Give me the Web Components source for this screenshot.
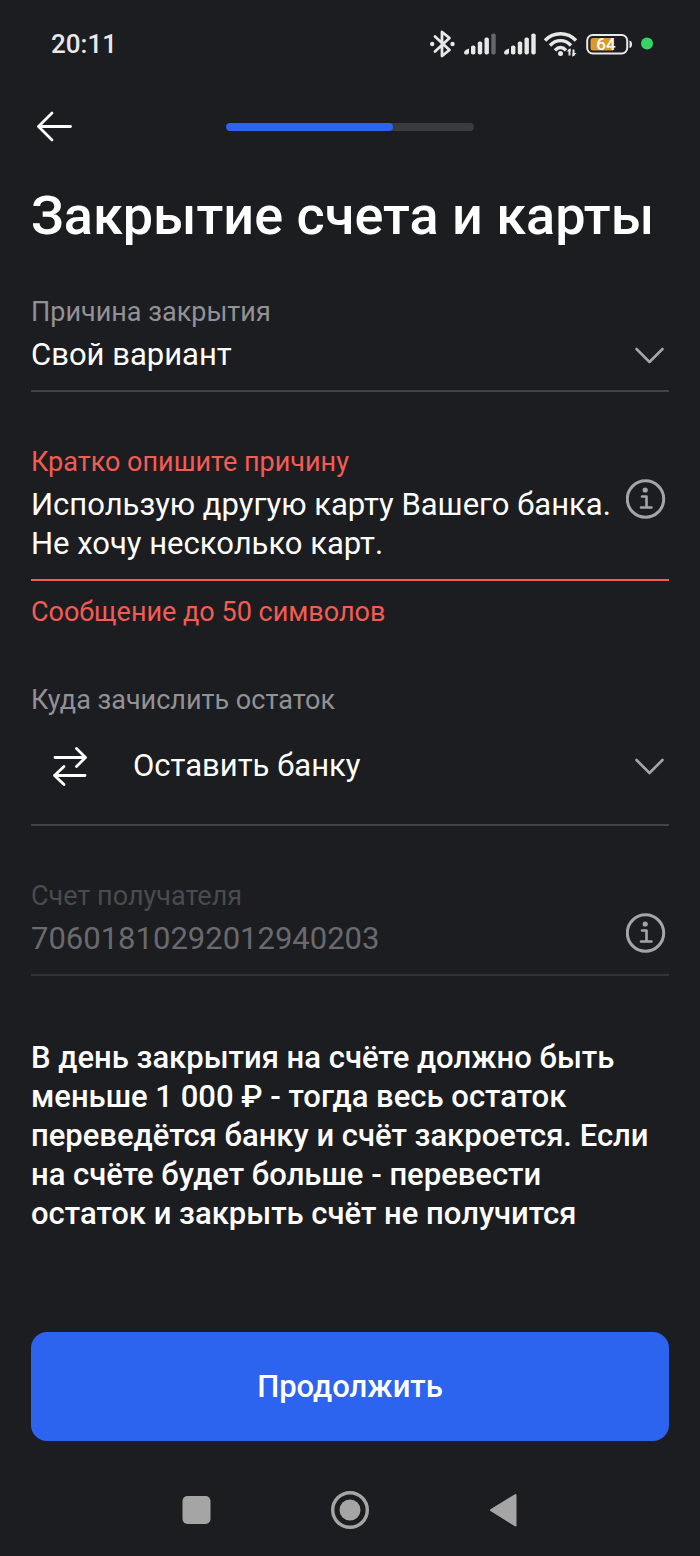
<!DOCTYPE html>
<html lang="ru">
<head>
<meta charset="utf-8">
<meta name="viewport" content="width=device-width, initial-scale=1">
<title>Закрытие счета и карты</title>
<style>
  body {
    margin: 0;
    background: #1c1d21;
    color: #ffffff;
    font-family: Roboto, "Liberation Sans", sans-serif;
    font-size: 31px;
    line-height: 39px;
  }
</style>
</head>
<body>
<close-account-screen></close-account-screen>

<script>
(function () {
  /* =========================
     SHARED
  ========================= */
  class BaseElement extends HTMLElement {
    constructor() {
      super();
      this.attachShadow({ mode: "open" });
      this.shadowRoot.innerHTML = this.template();
    }
  }

  const fieldStyles = `
    *{
      box-sizing:border-box;
    }

    :host{
      display:block;
      --label:#929196;
      --line:#424246;
    }

    .field{
      display:grid;
      grid-template-columns:minmax(0,1fr) auto;
      border-bottom:2px solid var(--line);
      padding-bottom:16px;
    }

    label{
      display:block;
      margin-bottom:5px;
      font-size:27px;
      line-height:36px;
      color:var(--label);
    }

    select,
    input,
    textarea{
      display:block;
      appearance:none;
      width:100%;
      margin:0;
      padding:0;
      border:0;
      border-radius:0;
      outline:0;
      background:none;
      color:inherit;
      font:inherit;
      resize:none;
      overflow:hidden;
    }
  `;

  /* =========================
     STATUS BAR
  ========================= */
  class StatusBar extends BaseElement {
    bars(lastColor) {
      return `
        <svg width="32" height="22" viewBox="0 0 32 22" fill="#e8e8e8">
          <path d="M0 19Q1.500 16 5 15.500V19.500Q5 21.500 3 21.500H1.500Q0 21.500 0 19Z"/>
          <rect x="7" y="12.500" width="4.400" height="9" rx="1.800"/>
          <rect x="13.800" y="8.500" width="4.400" height="13" rx="1.800"/>
          <rect x="20.500" y="4.500" width="4.400" height="17" rx="1.800"/>
          <rect x="27.300" y="0.500" width="4.400" height="21" rx="1.800" fill="${lastColor}"/>
        </svg>`;
    }

    template() {
      return `
      <style>
      :host{
        display:flex;
        align-items:center;
        justify-content:space-between;
        height:88px;
        padding:0 47px 0 51px;
      }

      time{
        font-size:26px;
        font-weight:500;
        color:#e8e8e8;
      }

      .icons{
        display:flex;
        align-items:center;
        gap:8px;
      }

      text{
        font:500 17px Roboto, "Liberation Sans", sans-serif;
      }
      </style>

      <time>20:11</time>

      <div class="icons">
        <svg width="26" height="28" viewBox="0 0 26 28" fill="none" stroke="#e8e8e8" stroke-width="2.800" stroke-linejoin="round" stroke-linecap="round">
          <path d="M5 6.500L19.500 20L12 26V2L19.500 8L5 21.500"/>
          <circle cx="2.200" cy="14" r="2.200" fill="#e8e8e8" stroke="none"/>
          <circle cx="22.500" cy="14" r="2.200" fill="#e8e8e8" stroke="none"/>
        </svg>
        ${this.bars("#66666a")}
        ${this.bars("#e8e8e8")}
        <svg width="34" height="26" viewBox="0 0 34 26" fill="none" stroke="#e8e8e8" stroke-width="3.400">
          <path d="M1 9.500C9.500 0.500 23.500 0.500 32 9.500"/>
          <path d="M6 14.500C12 8 21 8 27 14.500"/>
          <path d="M11 19.300C14.500 15.500 18.500 15.500 22 19.300"/>
          <circle cx="16.500" cy="22.500" r="2.500" fill="#e8e8e8" stroke="none"/>
          <path stroke-width="2" d="M25.500 24.500V18M29.500 18.500V25"/>
          <path fill="#e8e8e8" stroke="none" d="M22.500 20.500L26.500 17V20.500ZM28.500 22H32.500L28.500 26Z"/>
        </svg>
        <svg width="47" height="22" viewBox="0 0 47 22">
          <rect x="1.200" y="2" width="40" height="18.500" rx="5.500" fill="none" stroke="#e8e8e8" stroke-width="2"/>
          <path fill="#dc9a2c" d="M7 5H27V17.500H7Q4.500 17.500 4.500 15V7.500Q4.500 5 7 5Z"/>
          <path fill="#e8e8e8" d="M43.500 7.500Q46 8 46 11.200Q46 14.500 43.500 15Z"/>
          <text x="20" y="17" text-anchor="middle" fill="#fff">64</text>
        </svg>
        <svg width="12" height="14" viewBox="0 0 12 14"><circle cx="6" cy="6.500" r="6" fill="#37d365"/></svg>
      </div>
      `;
    }
  }

  /* =========================
     TOP BAR
  ========================= */
  class TopBar extends BaseElement {
    template() {
      return `
      <style>
      :host{
        display:grid;
        grid-template-columns:1fr 39% 1fr;
        align-items:center;
        height:78px;
        padding:0 31px;
      }

      button{
        display:flex;
        width:48px;
        padding:8px 4px;
        border:0;
        background:none;
      }

      progress{
        appearance:none;
        display:block;
        width:100%;
        height:8px;
        border:0;
        border-radius:4px;
        overflow:hidden;
        background:#3a3b3f;
      }

      progress::-webkit-progress-bar{
        background:#3a3b3f;
      }

      progress::-webkit-progress-value{
        background:#2c63ef;
        border-radius:4px;
      }
      </style>

      <button type="button" aria-label="Назад">
        <svg width="38" height="32" viewBox="0 0 38 32" fill="none" stroke="#fff" stroke-width="2.800" stroke-linecap="round" stroke-linejoin="round">
          <path d="M35.500 15.500H3.500M17 2L3.500 15.500L17 29"/>
        </svg>
      </button>
      <progress max="249" value="168" aria-label="Шаг"></progress>
      `;
    }
  }

  /* =========================
     SELECT FIELD
  ========================= */
  class SelectField extends BaseElement {
    template() {
      return `
      <style>
      ${fieldStyles}

      label{
        grid-column:1 / -1;
      }

      .lead{
        grid-area:2 / 1;
        align-self:center;
        pointer-events:none;
      }

      ::slotted(svg){
        display:block;
        margin-left:20px;
      }

      select{
        grid-area:2 / 1 / 3 / -1;
      }

      :host([tall]) select{
        height:85px;
        padding-left:102px;
      }

      .chevron{
        grid-area:2 / 2;
        align-self:center;
        margin-right:4px;
        pointer-events:none;
      }
      </style>

      <div class="field">
        <label for="control">${this.getAttribute("label")}</label>
        <select id="control">
          <option>${this.getAttribute("value")}</option>
        </select>
        <div class="lead"><slot></slot></div>
        <svg class="chevron" width="31" height="20" viewBox="0 0 31 20" fill="none" stroke="#a5a4a9" stroke-width="2.600" stroke-linecap="round" stroke-linejoin="round">
          <path d="M2.500 4L15.500 17L28.500 4"/>
        </svg>
      </div>
      `;
    }
  }

  /* =========================
     TEXT FIELD
  ========================= */
  class TextField extends BaseElement {
    template() {
      const value = this.getAttribute("value");
      const rows = this.getAttribute("rows");
      const error = this.getAttribute("error");
      const disabled = this.hasAttribute("disabled") ? "disabled" : "";

      return `
      <style>
      ${fieldStyles}

      :host([error]){
        --label:#f45b53;
        --line:#f45b53;
      }

      :host([disabled]){
        --label:#4b4a4f;
        --line:#333237;
      }

      input{
        height:39px;
      }

      input:disabled{
        color:#6a696e;
        opacity:1;
      }

      button{
        display:flex;
        align-self:start;
        margin:35px 3px 0 0;
        padding:0;
        border:0;
        background:none;
      }

      .error{
        margin:13px 0 0;
        font-size:27px;
        line-height:36px;
        color:#f45b53;
      }
      </style>

      <div class="field">
        <div>
          <label for="control">${this.getAttribute("label")}</label>
          ${
            rows
              ? `<textarea id="control" rows="${rows}" spellcheck="false">${value}</textarea>`
              : `<input id="control" type="text" value="${value}" ${disabled}>`
          }
        </div>
        <button type="button" aria-label="Подсказка">
          <svg width="40" height="40" viewBox="0 0 40 40" fill="none" stroke="#a5a4a9" stroke-width="2.600" stroke-linecap="round" stroke-linejoin="round">
            <circle cx="19.500" cy="20" r="18.200" stroke-width="3"/>
            <circle cx="19.200" cy="11" r="2.600" fill="#a5a4a9" stroke="none"/>
            <path d="M16 17.500H20.500V28.500M15 28.500H25.500"/>
          </svg>
        </button>
      </div>
      ${error ? `<p class="error">${error}</p>` : ""}
      `;
    }
  }

  /* =========================
     PRIMARY BUTTON
  ========================= */
  class PrimaryButton extends BaseElement {
    template() {
      return `
      <style>
      :host{
        display:block;
      }

      button{
        display:block;
        width:100%;
        padding:35px 16px;
        border:0;
        border-radius:16px;
        background:#2c63ef;
        color:#ffffff;
        font:inherit;
        font-weight:500;
      }
      </style>

      <button type="button"><slot></slot></button>
      `;
    }
  }

  /* =========================
     SYSTEM NAVIGATION
  ========================= */
  class SystemNav extends BaseElement {
    template() {
      return `
      <style>
      :host{
        display:flex;
        align-items:center;
        justify-content:center;
        gap:98px;
        height:92px;
      }

      button{
        display:flex;
        justify-content:center;
        width:56px;
        padding:8px 0;
        border:0;
        background:none;
      }
      </style>

      <button type="button" aria-label="Недавние">
        <svg width="40" height="40" viewBox="0 0 40 40" fill="#a5a5a5"><rect x="6.500" y="6" width="28" height="28" rx="5"/></svg>
      </button>
      <button type="button" aria-label="Домой">
        <svg width="40" height="40" viewBox="0 0 40 40" fill="#a5a5a5">
          <circle cx="20" cy="20" r="17.300" fill="none" stroke="#a5a5a5" stroke-width="3.400"/>
          <circle cx="20" cy="20" r="10.500"/>
        </svg>
      </button>
      <button type="button" aria-label="Назад">
        <svg width="40" height="40" viewBox="0 0 40 40" fill="#a5a5a5" stroke="#a5a5a5" stroke-width="2" stroke-linejoin="round"><path d="M7 20.200L31.500 5V35.500Z"/></svg>
      </button>
      `;
    }
  }

  /* =========================
     SCREEN
  ========================= */
  class CloseAccountScreen extends BaseElement {
    template() {
      return `
      <style>
      :host{
        display:flex;
        flex-direction:column;
        min-height:100vh;
      }

      main{
        flex:1;
        display:flex;
        flex-direction:column;
        padding:16px 31px 23px;
      }

      h1{
        margin:0 0 44px;
        font-size:54px;
        line-height:68px;
        font-weight:500;
      }

      form{
        display:flex;
        flex-direction:column;
        gap:52px;
      }

      .note{
        margin:62px 0 48px;
        padding-right:8px;
        font-weight:500;
      }

      primary-button{
        margin-top:auto;
      }
      </style>

      <status-bar></status-bar>
      <top-bar></top-bar>

      <main>
        <h1>Закрытие счета и карты</h1>

        <form>
          <select-field label="Причина закрытия" value="Свой вариант"></select-field>

          <text-field
            label="Кратко опишите причину"
            value="Использую другую карту Вашего банка. Не хочу несколько карт."
            rows="2"
            error="Сообщение до 50 символов"
          ></text-field>

          <select-field tall label="Куда зачислить остаток" value="Оставить банку">
            <svg width="38" height="42" viewBox="0 0 38 42" fill="none" stroke="#fff" stroke-width="2.800" stroke-linecap="round" stroke-linejoin="round">
              <path d="M4 12.500H34.500M25.500 3.500L34.500 12.500L25.500 21.500"/>
              <path d="M34 30.500H3.500M13 21.500L3.500 30.500L13 39.500"/>
            </svg>
          </select-field>

          <text-field label="Счет получателя" value="70601810292012940203" disabled></text-field>
        </form>

        <p class="note">В день закрытия на счёте должно быть меньше 1&nbsp;000&nbsp;₽ - тогда весь остаток переведётся банку и счёт закроется. Если на счёте будет больше - перевести остаток и закрыть счёт не получится</p>

        <primary-button>Продолжить</primary-button>
      </main>

      <system-nav></system-nav>
      `;
    }
  }

  customElements.define("status-bar", StatusBar);
  customElements.define("top-bar", TopBar);
  customElements.define("select-field", SelectField);
  customElements.define("text-field", TextField);
  customElements.define("primary-button", PrimaryButton);
  customElements.define("system-nav", SystemNav);
  customElements.define("close-account-screen", CloseAccountScreen);
})();
</script>
</body>
</html>
